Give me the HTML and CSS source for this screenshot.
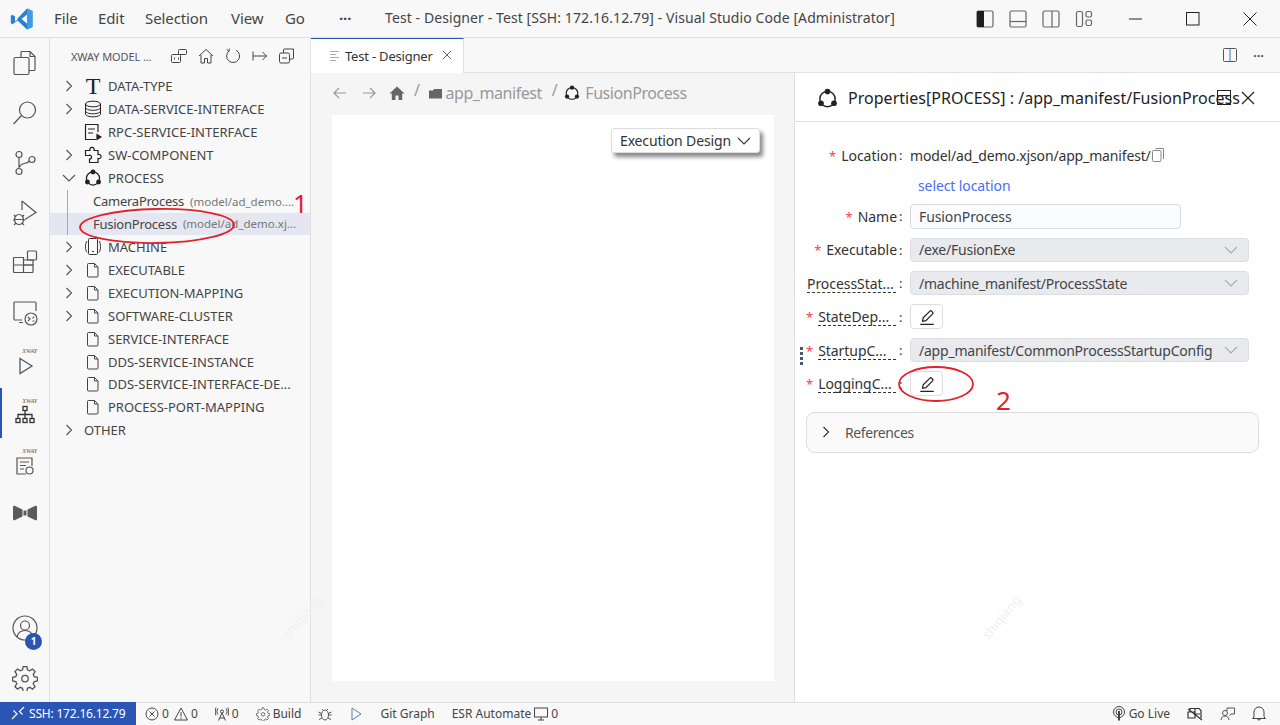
FILE: index.html
```html
<!DOCTYPE html>
<html lang="en">
<head>
    <meta charset="UTF-8">
    <title>Test - Designer - Test [SSH: 172.16.12.79] - Visual Studio Code [Administrator]</title>
    <link rel="stylesheet" href="styles.css">
</head>
<body>
    <svg class="sprite" width="0" height="0">
        <symbol id="i-chev-r" viewBox="0 0 16 16"><path d="M5.500 3l5 5-5 5" fill="none" stroke="currentColor" stroke-width="1.100"/></symbol>
        <symbol id="i-chev-d" viewBox="0 0 16 16"><path d="M2 5l6 6 6-6" fill="none" stroke="currentColor" stroke-width="1.100"/></symbol>
        <symbol id="i-x" viewBox="0 0 16 16"><path d="M2.500 2.500l11 11M13.500 2.500l-11 11" fill="none" stroke="currentColor" stroke-width="1.100"/></symbol>
        <symbol id="i-file" viewBox="0 0 16 16"><path d="M3.500 1.500h6l3.500 3.500v9a1 1 0 0 1-1 1h-8.500a1 1 0 0 1-1-1v-11.500a1 1 0 0 1 1-1zM9.500 1.500v3.500h3.500" fill="none" stroke="#444" stroke-width="1"/></symbol>
        <symbol id="i-process" viewBox="0 0 20 20"><circle cx="10" cy="10.500" r="7.300" fill="none" stroke="#222" stroke-width="1.400"/><circle cx="10" cy="3.300" r="2.700" fill="#222"/><circle cx="3.800" cy="14.500" r="2.700" fill="#222"/><circle cx="16.200" cy="14.500" r="2.700" fill="#222"/></symbol>
        <symbol id="i-pen" viewBox="0 0 16 16"><path d="M2 14.500h12M4 11.800l.6-3 6-6a1 1 0 0 1 1.400 0l1 1a1 1 0 0 1 0 1.400l-6 6z" fill="none" stroke="#222" stroke-width="1.100"/></symbol>
        <symbol id="i-gear" viewBox="0 0 24 24"><path d="M10.300 1.500h3.400l.6 3 2 .9 2.600-1.700 2.400 2.400-1.700 2.600.9 2 3 .6v3.400l-3 .6-.9 2 1.700 2.600-2.400 2.400-2.600-1.700-2 .9-.6 3h-3.400l-.6-3-2-.9-2.600 1.700-2.400-2.400 1.700-2.600-.9-2-3-.6v-3.400l3-.6.9-2-1.700-2.600 2.400-2.400 2.600 1.700 2-.9z" fill="none" stroke="currentColor" stroke-width="1.200"/><circle cx="12" cy="12.500" r="3" fill="none" stroke="currentColor" stroke-width="1.200"/></symbol>
    </svg>

    <div class="titlebar">
        <svg class="logo" width="24" height="24" viewBox="0 0 24 24"><path d="M17 1.500l5.500 2.600v15.800l-5.500 2.600-9.500-9-5 3.800-1.700-1v-7.600l1.700-1 5 3.800z" fill="#2b7fd4"/><path d="M17 7.500l-5.500 4.500 5.500 4.500z" fill="#fff"/><path d="M17 1.500l5.500 2.600v15.800l-5.500 2.600z" fill="#3d9be9"/><path d="M5 9.500l3 2.500-3 2.500z" fill="#fff"/></svg>
        <nav class="menu">
            <span class="m-file">File</span>
            <span class="m-edit">Edit</span>
            <span class="m-sel">Selection</span>
            <span class="m-view">View</span>
            <span class="m-go">Go</span>
            <span class="m-more">···</span>
        </nav>
        <div class="wintitle">Test - Designer - Test [SSH: 172.16.12.79] - Visual Studio Code [Administrator]</div>
        <div class="layout-btns">
            <svg width="18" height="18" viewBox="0 0 18 18"><rect x="1" y="1" width="16" height="16" rx="1.500" fill="none" stroke="#666" stroke-width="1.200"/><rect x="1" y="1" width="7" height="16" fill="#1e1e1e"/></svg>
            <svg width="18" height="18" viewBox="0 0 18 18"><rect x="1" y="1" width="16" height="16" rx="1.500" fill="none" stroke="#666" stroke-width="1.200"/><path d="M1 11.500h16" stroke="#666" stroke-width="1.200"/></svg>
            <svg width="18" height="18" viewBox="0 0 18 18"><rect x="1" y="1" width="16" height="16" rx="1.500" fill="none" stroke="#666" stroke-width="1.200"/><path d="M10 1v16" stroke="#666" stroke-width="1.200"/></svg>
            <svg width="18" height="18" viewBox="0 0 18 18"><rect x="1.500" y="1.500" width="6" height="15" rx="1.500" fill="none" stroke="#666" stroke-width="1.200"/><rect x="11" y="1.500" width="5.500" height="5.500" rx="1.500" fill="none" stroke="#666" stroke-width="1.200"/><rect x="11" y="10" width="5.500" height="5.500" rx="1.500" fill="none" stroke="#666" stroke-width="1.200"/></svg>
        </div>
        <div class="win-btns">
            <svg width="14" height="14" viewBox="0 0 14 14"><path d="M0 7h13" stroke="#222"/></svg>
            <svg width="14" height="14" viewBox="0 0 14 14"><rect x=".5" y=".5" width="12.500" height="12.500" fill="none" stroke="#222"/></svg>
            <svg width="14" height="14" viewBox="0 0 14 14"><path d="M.5.5l13 13M13.500.5l-13 13" stroke="#222" fill="none"/></svg>
        </div>
    </div>

    <div class="main">
        <aside class="activity">
            <div class="act"><svg width="26" height="26" viewBox="0 0 26 26" fill="none" stroke="#555" stroke-width="1.200"><path d="M10 1.500h8l5 5v13a1 1 0 0 1-1 1h-5"/><path d="M10 1.500a1 1 0 0 0-1 1v5M18 1.500v5h5"/><rect x="2" y="7.500" width="15" height="17" rx="1.500"/></svg></div>
            <div class="act"><svg width="26" height="26" viewBox="0 0 26 26" fill="none" stroke="#555" stroke-width="1.200"><circle cx="15.500" cy="10" r="8"/><path d="M9.500 15.500L1.500 24"/></svg></div>
            <div class="act"><svg width="26" height="26" viewBox="0 0 26 26" fill="none" stroke="#555" stroke-width="1.200"><circle cx="7" cy="4.500" r="3"/><circle cx="7" cy="21.500" r="3"/><circle cx="20" cy="9.500" r="3"/><path d="M7 7.500v11M17.500 11C14 15 9 12 7.500 17"/></svg></div>
            <div class="act"><svg width="26" height="26" viewBox="0 0 26 26" fill="none" stroke="#555" stroke-width="1.200"><path d="M10 1l14 11.500-11 7"/><path d="M10 1v9"/><ellipse cx="7" cy="19.500" rx="4.500" ry="5"/><path d="M2 15l2 2M12 15l-2 2M1 20h2M11 20h2M2 25l2-2M12 25l-2-2M3 19.500h8"/></svg></div>
            <div class="act"><svg width="26" height="26" viewBox="0 0 26 26" fill="none" stroke="#555" stroke-width="1.200"><path d="M2 7.500h9.500v15H2a.5.5 0 0 1-.5-.5V8a.5.5 0 0 1 .5-.5zM1.500 15h19.500v7a.5.5 0 0 1-.5.500h-9V7.500"/><path d="M11.500 15h9.500v-5h-9.500" stroke="#555"/><rect x="15.500" y="1" width="9" height="9" rx="1"/></svg></div>
            <div class="act"><svg width="26" height="26" viewBox="0 0 26 26" fill="none" stroke="#555" stroke-width="1.200"><path d="M10 20H3a1 1 0 0 1-1-1V3a1 1 0 0 1 1-1h20a1 1 0 0 1 1 1v8M7 22.500h4"/><circle cx="19" cy="19" r="6"/><path d="M16 17l2 2-2 2M20.500 21h2M22 16.800l-1.500 1.500"/></svg></div>
            <div class="act xway"><i class="xw">XWAY</i><svg width="22" height="22" viewBox="0 0 22 22" fill="none" stroke="#555" stroke-width="1.300"><path d="M6 4.500l12 7.500-12 7.500z"/></svg></div>
            <div class="act active xway"><i class="xw">XWAY</i><svg width="22" height="22" viewBox="0 0 22 22" fill="none" stroke="#333" stroke-width="1.300"><rect x="9" y="2.500" width="4" height="4"/><rect x="2" y="14.500" width="4" height="4"/><rect x="9" y="14.500" width="4" height="4"/><rect x="16" y="14.500" width="4" height="4"/><path d="M11 6.500v8M4 14.500v-4h14v4"/></svg></div>
            <div class="act xway"><i class="xw">XWAY</i><svg width="22" height="22" viewBox="0 0 22 22" fill="none" stroke="#555" stroke-width="1.200"><path d="M12 20H3V4h15v8M6 8h9M6 11.500h6M6 15h4"/><circle cx="15.500" cy="16.500" r="3.500"/></svg></div>
            <div class="act"><svg width="26" height="18" viewBox="0 0 26 18"><path d="M1 2.500l1-1 8.500 4v7l-8.500 4-1-1zM25 2.500l-1-1-8.500 4v7l8.500 4 1-1z" fill="#5a5a5a"/><rect x="11.500" y="6.500" width="3" height="5" fill="#5a5a5a"/></svg></div>
            <div class="act-spacer"></div>
            <div class="act account">
                <svg width="26" height="26" viewBox="0 0 26 26" fill="none" stroke="#555" stroke-width="1.200"><circle cx="13" cy="13" r="12"/><circle cx="13" cy="10.500" r="4.500"/><path d="M5 22c1-5 4-6.500 8-6.500s7 1.500 8 6.500"/></svg>
                <span class="badge">1</span>
            </div>
            <div class="act gear"><svg width="26" height="26"><use href="#i-gear"/></svg></div>
        </aside>

        <aside class="sidebar">
            <header class="side-head">
                <span class="side-title">XWAY MODEL ...</span>
                <div class="side-tools">
                    <svg width="16" height="16" viewBox="0 0 16 16" fill="none" stroke="#444"><rect x=".5" y="6.500" width="9" height="8" rx="1"/><rect x="7.500" y="1.500" width="8" height="5" rx="1"/><path d="M3 10.500h1M7 10.500h1" stroke-width="2"/></svg>
                    <svg width="16" height="16" viewBox="0 0 16 16" fill="none" stroke="#444"><path d="M1 8l7-6.500L15 8M3 7v8h3.500v-4.500h3V15H13V7"/></svg>
                    <svg width="16" height="16" viewBox="0 0 16 16" fill="none" stroke="#444"><path d="M4 3a6.500 6.500 0 1 0 7-.8M1.500 1.500L4 3.500l.5-2.800"/></svg>
                    <svg width="16" height="16" viewBox="0 0 16 16" fill="none" stroke="#444"><path d="M1 3.500v9M1 8h13.500M10.500 4l4 4-4 4"/></svg>
                    <svg width="16" height="16" viewBox="0 0 16 16" fill="none" stroke="#444"><rect x=".5" y="5" width="10" height="10" rx="1.500"/><path d="M4.500 5V2a1 1 0 0 1 1-1h9v9a1 1 0 0 1-1 1h-3M3 10h5"/></svg>
                </div>
            </header>
            <ul class="tree">
                <li class="row"><svg class="chev" width="16" height="16"><use href="#i-chev-r"/></svg><span class="t-icon serif-t">T</span><span>DATA-TYPE</span></li>
                <li class="row"><svg class="chev" width="16" height="16"><use href="#i-chev-r"/></svg><span class="t-icon"><svg width="18" height="18" viewBox="0 0 18 18" fill="none" stroke="#222"><ellipse cx="9" cy="4" rx="7.500" ry="2.800"/><path d="M1.500 4v10c0 1.500 3.300 2.800 7.500 2.800s7.500-1.300 7.500-2.800V4M1.500 7.500c0 1.500 3.300 2.800 7.500 2.800s7.500-1.300 7.500-2.800M1.500 11c0 1.500 3.300 2.800 7.500 2.800s7.500-1.300 7.500-2.800"/></svg></span><span>DATA-SERVICE-INTERFACE</span></li>
                <li class="row no-chev"><span class="t-icon"><svg width="18" height="18" viewBox="0 0 18 18" fill="none" stroke="#222" stroke-width="1.200"><path d="M14 9V1.500H1.500v15H12M4 6h7M4 10h5"/><path d="M13 11.500l4 2.500-4 2.500z" fill="#222"/></svg></span><span>RPC-SERVICE-INTERFACE</span></li>
                <li class="row"><svg class="chev" width="16" height="16"><use href="#i-chev-r"/></svg><span class="t-icon"><svg width="18" height="18" viewBox="0 0 18 18" fill="none" stroke="#222" stroke-width="1.200"><path d="M1.500 4.500h4.500a2.200 2.200 0 1 1 4 0h4v4a2.200 2.200 0 1 1 0 4v4h-8.500v-3.500a2 2 0 1 0 0-4V9.500H1.500z"/></svg></span><span>SW-COMPONENT</span></li>
                <li class="row"><svg class="chev" width="16" height="16"><use href="#i-chev-d"/></svg><span class="t-icon"><svg width="18" height="18"><use href="#i-process"/></svg></span><span>PROCESS</span></li>
                <li class="row leaf"><span class="leaf-name">CameraProcess</span><span class="leaf-desc">(model/ad_demo....</span></li>
                <li class="row leaf selected"><span class="leaf-name">FusionProcess</span><span class="leaf-desc">(model/ad_demo.xj...</span></li>
                <li class="row"><svg class="chev" width="16" height="16"><use href="#i-chev-r"/></svg><span class="t-icon"><svg width="18" height="18" viewBox="0 0 18 18" fill="none" stroke="#333"><rect x="4.500" y=".5" width="9" height="16" rx="1"/><path d="M3 3C1 5 1 12 3 14.500M15 3c2 2 2 9 0 11.500M8 13.500h2"/></svg></span><span>MACHINE</span></li>
                <li class="row"><svg class="chev" width="16" height="16"><use href="#i-chev-r"/></svg><span class="t-icon"><svg width="16" height="16"><use href="#i-file"/></svg></span><span>EXECUTABLE</span></li>
                <li class="row"><svg class="chev" width="16" height="16"><use href="#i-chev-r"/></svg><span class="t-icon"><svg width="16" height="16"><use href="#i-file"/></svg></span><span>EXECUTION-MAPPING</span></li>
                <li class="row"><svg class="chev" width="16" height="16"><use href="#i-chev-r"/></svg><span class="t-icon"><svg width="16" height="16"><use href="#i-file"/></svg></span><span>SOFTWARE-CLUSTER</span></li>
                <li class="row no-chev"><span class="t-icon"><svg width="16" height="16"><use href="#i-file"/></svg></span><span>SERVICE-INTERFACE</span></li>
                <li class="row no-chev"><span class="t-icon"><svg width="16" height="16"><use href="#i-file"/></svg></span><span>DDS-SERVICE-INSTANCE</span></li>
                <li class="row no-chev"><span class="t-icon"><svg width="16" height="16"><use href="#i-file"/></svg></span><span>DDS-SERVICE-INTERFACE-DE...</span></li>
                <li class="row no-chev"><span class="t-icon"><svg width="16" height="16"><use href="#i-file"/></svg></span><span>PROCESS-PORT-MAPPING</span></li>
                <li class="row"><svg class="chev" width="16" height="16"><use href="#i-chev-r"/></svg><span>OTHER</span></li>
            </ul>
        </aside>

        <section class="editor">
            <div class="tabs">
                <div class="tab">
                    <svg width="12" height="12" viewBox="0 0 12 12" stroke="#aaa"><path d="M1 1.500h9M1 4.500h6M1 7.500h9M1 10.500h6"/></svg>
                    <span>Test - Designer</span>
                    <svg class="tab-x" width="12" height="12"><use href="#i-x"/></svg>
                </div>
                <div class="tab-actions">
                    <svg width="14" height="14" viewBox="0 0 14 14" fill="none"><rect x=".5" y=".5" width="13" height="13" rx="1" stroke="#555"/><path d="M7 .5v13" stroke="#2b7fd4"/></svg>
                    <span class="dots">···</span>
                </div>
            </div>
            <div class="panes">
                <div class="designer">
                    <div class="crumbs">
                        <svg width="16" height="16" viewBox="0 0 16 16" fill="none" stroke="#999" stroke-width="1.200"><path d="M14 8H2M7 3L2 8l5 5"/></svg>
                        <svg class="c-next" width="16" height="16" viewBox="0 0 16 16" fill="none" stroke="#999" stroke-width="1.200"><path d="M2 8h12M9 3l5 5-5 5"/></svg>
                        <svg class="c-home" width="16" height="16" viewBox="0 0 16 16" fill="#666"><path d="M8 1.500L0.500 8.500h2.300V15h3.700v-4.500h3V15h3.700V8.500h2.300z"/></svg>
                        <span class="c-sep">/</span>
                        <svg class="c-folder" width="13" height="13" viewBox="0 0 13 13" fill="#666"><path d="M0 3.500h4l1-1.500h8v9.500H0z"/></svg>
                        <span class="c-text">app_manifest</span>
                        <span class="c-sep c-sep2">/</span>
                        <svg class="c-proc" width="16" height="16"><use href="#i-process"/></svg>
                        <span class="c-text">FusionProcess</span>
                    </div>
                    <div class="canvas">
                        <button class="design-btn">Execution Design <svg width="16" height="16"><use href="#i-chev-d"/></svg></button>
                    </div>
                </div>
                <div class="props">
                    <header class="props-head">
                        <svg width="21" height="21"><use href="#i-process"/></svg>
                        <span class="props-title">Properties[PROCESS] : /app_manifest/FusionProcess</span>
                        <svg class="head-box" width="14" height="15" viewBox="0 0 14 15" fill="none" stroke="#222"><rect x=".5" y=".5" width="13" height="14"/><path d="M.5 5.500h13"/></svg>
                        <svg class="head-x" width="14" height="14" viewBox="0 0 14 14"><path d="M1 1l12 12M13 1L1 13" stroke="#222" stroke-width="1.200"/></svg>
                    </header>
                    <div class="form">
                        <div class="f-row f-loc">
                            <label class="f-label"><em>*</em>Location</label><b>:</b>
                            <div class="f-val loc-val">model/ad_demo.xjson/app_manifest/
                                <svg width="12" height="14" viewBox="0 0 12 14" fill="none" stroke="#888"><path d="M3.500.5h8v10.500"/><rect x=".5" y="2.500" width="8.500" height="11" rx="1"/></svg>
                            </div>
                        </div>
                        <a class="select-loc">select location</a>
                        <div class="f-row">
                            <label class="f-label"><em>*</em>Name</label><b>:</b>
                            <div class="f-input">FusionProcess</div>
                        </div>
                        <div class="f-row">
                            <label class="f-label"><em>*</em>Executable</label><b>:</b>
                            <div class="f-select">/exe/FusionExe<svg width="16" height="16"><use href="#i-chev-d"/></svg></div>
                        </div>
                        <div class="f-row">
                            <label class="f-label"><span class="dash dash-wide">ProcessStat...</span></label><b>:</b>
                            <div class="f-select">/machine_manifest/ProcessState<svg width="16" height="16"><use href="#i-chev-d"/></svg></div>
                        </div>
                        <div class="f-row">
                            <label class="f-label"><em>*</em><span class="dash">StateDep...</span></label><b>:</b>
                            <button class="pen-btn"><svg width="18" height="18"><use href="#i-pen"/></svg></button>
                        </div>
                        <div class="f-row">
                            <label class="f-label"><em>*</em><span class="dash">StartupC...</span></label><b>:</b>
                            <div class="f-select">/app_manifest/CommonProcessStartupConfig<svg width="16" height="16"><use href="#i-chev-d"/></svg></div>
                        </div>
                        <div class="f-row">
                            <label class="f-label"><em>*</em><span class="dash">LoggingC...</span></label><b>:</b>
                            <button class="pen-btn"><svg width="18" height="18"><use href="#i-pen"/></svg></button>
                        </div>
                        <div class="refs"><svg width="16" height="16"><use href="#i-chev-r"/></svg><span>References</span></div>
                    </div>
                </div>
            </div>
        </section>
    </div>

    <footer class="status">
        <div class="remote">
            <svg width="14" height="14" viewBox="0 0 14 14" fill="none" stroke="#fff" stroke-width="1.200"><path d="M1 13l5-5-3.500-3.500M13 1L8.500 5.500 11.500 8.500"/></svg>
            SSH: 172.16.12.79
        </div>
        <div class="st-item st-first">
            <svg width="14" height="14" viewBox="0 0 14 14" fill="none" stroke="#444"><circle cx="7" cy="7" r="6"/><path d="M4.500 4.500l5 5M9.500 4.500l-5 5"/></svg>0
            <svg class="st-warn" width="14" height="14" viewBox="0 0 14 14" fill="none" stroke="#444"><path d="M7 1l6.500 12H.5zM7 5v4.500M7 10.500v1.500"/></svg>0
        </div>
        <div class="st-item">
            <svg width="14" height="14" viewBox="0 0 14 14" fill="none" stroke="#444"><circle cx="7" cy="4.500" r="1.500"/><path d="M7 6l-3.500 7.500M7 6l3.500 7.500M4.500 11h5M3 1.500c-1.500 2-1.500 4.500 0 6M11 1.500c1.500 2 1.500 4.500 0 6M1 .5c-1 3-1 6 0 8M13 .5c1 3 1 6 0 8"/></svg>0
        </div>
        <div class="st-item"><svg width="14" height="14"><use href="#i-gear"/></svg>Build</div>
        <div class="st-item">
            <svg width="14" height="14" viewBox="0 0 14 14" fill="none" stroke="#555"><ellipse cx="7" cy="8" rx="3.500" ry="5"/><path d="M4 2l1.500 1.500M10 2L8.500 3.500M.5 5l3 1.500M13.500 5l-3 1.500M.5 8h3M13.500 8h-3M1 12.500L4 11M13 12.500L10 11"/></svg>
        </div>
        <div class="st-item"><svg width="14" height="14" viewBox="0 0 14 14" fill="none" stroke="#5a7ea8"><path d="M3 1l9 6-9 6z"/></svg></div>
        <div class="st-item">Git Graph</div>
        <div class="st-item">ESR Automate
            <svg width="14" height="14" viewBox="0 0 14 14" fill="none" stroke="#444"><rect x=".5" y="1" width="13" height="9"/><path d="M7 10v3M4 13h6"/></svg>0
        </div>
        <div class="st-spacer"></div>
        <div class="st-item">
            <svg width="14" height="15" viewBox="0 0 14 15" fill="none" stroke="#444"><circle cx="7" cy="6" r="5.500"/><circle cx="7" cy="6" r="3"/><path d="M7 5v9.500" stroke-width="2"/></svg>Go Live
        </div>
        <div class="st-item">
            <svg width="16" height="14" viewBox="0 0 16 14" fill="none" stroke="#333" stroke-width="1.200"><path d="M3 5V1.500h9l2 2V11M1 5h7v6H1zM8 2v5h5M1 2l14 11"/></svg>
        </div>
        <div class="st-item">
            <svg width="15" height="14" viewBox="0 0 15 14" fill="none" stroke="#555"><circle cx="5" cy="6" r="2.500"/><path d="M1 13c.5-3 2-4 4-4s3.500 1 4 4M7 4V1h7.500v6H11l-1.500 1.500"/></svg>
        </div>
        <div class="st-item st-last">
            <svg width="14" height="15" viewBox="0 0 14 15" fill="none" stroke="#444"><path d="M2 11V6a5 5 0 0 1 10 0v5l1.500 1.500H.5zM5.500 12.500a1.500 1.500 0 0 0 3 0"/></svg>
        </div>
    </footer>

    <!-- annotations drawn over the screenshot -->
    <svg class="marks" width="1280" height="725" viewBox="0 0 1280 725" fill="none" stroke="#e3202c" stroke-width="1.800">
        <ellipse cx="157" cy="226" rx="77" ry="17" transform="rotate(-1 157 226)"/>
        <ellipse cx="936" cy="384" rx="37" ry="17"/>
    </svg>
    <span class="mark-num n1">1</span>
    <span class="mark-num n2">2</span>
    <div class="grip"><i></i><i></i><i></i><i></i></div>
    <span class="wm w1">shiqiang</span>
    <span class="wm w2">shiqiang</span>
</body>
</html>
```
FILE: styles.css
```css
* {
    box-sizing: border-box;
}

html, body {
    margin: 0;
    height: 100%;
    overflow: hidden;
}

body {
    width: 1280px;
    height: 725px;
    display: flex;
    flex-direction: column;
    position: relative;
    font-family: "Noto Sans", "Open Sans", sans-serif;
    font-size: 13px;
    color: #333;
    background: #f8f8f8;
}

.sprite {
    position: absolute;
}

svg {
    flex: none;
    display: block;
}

/* title bar */
.titlebar {
    height: 38px;
    flex: none;
    display: flex;
    align-items: center;
    border-bottom: 1px solid #e0e0e0;
    background: #f8f8f8;
    padding-left: 10px;
    font-size: 14px;
}

.menu {
    display: flex;
    margin-left: 20px;
    margin-bottom: 2px;
    color: #444;
    font-size: 15px;
    letter-spacing: -0.1px;
}

.m-file { width: 44px; }
.m-edit { width: 47px; }
.m-sel { width: 86px; }
.m-view { width: 54px; }
.m-go { width: 54px; }
.m-more { width: 30px; font-weight: 700; }

.wintitle {
    position: absolute;
    left: 385px;
    top: 8px;
    color: #444;
    white-space: nowrap;
    letter-spacing: 0.09px;
}

.layout-btns {
    margin-left: auto;
    display: flex;
    gap: 15px;
    margin-right: 36px;
}

.win-btns {
    display: flex;
    gap: 43px;
    margin-right: 23px;
}

/* main area */
.main {
    flex: 1;
    display: flex;
    min-height: 0;
}

.activity {
    width: 50px;
    flex: none;
    display: flex;
    flex-direction: column;
    border-right: 1px solid #e0e0e0;
}

.act {
    height: 50px;
    flex: none;
    display: flex;
    align-items: center;
    justify-content: center;
    position: relative;
}

.act.active {
    border-left: 2px solid #2a55b5;
    padding-right: 2px;
}

.act-spacer {
    flex: 1;
}

.xway svg {
    margin-top: 3px;
}

.xw {
    position: absolute;
    top: 9px;
    left: 21px;
    font-family: "Liberation Serif", serif;
    font-size: 7px;
    color: #555;
    transform: scaleX(0.85);
}

.active .xw {
    left: 19px;
}

.badge {
    position: absolute;
    left: 25px;
    top: 30px;
    width: 17px;
    height: 17px;
    border-radius: 50%;
    background: #2a55b5;
    color: #fff;
    font-size: 10px;
    font-weight: 700;
    line-height: 17px;
    text-align: center;
}

.gear {
    color: #555;
    height: 49px;
}

/* sidebar */
.sidebar {
    width: 261px;
    flex: none;
    border-right: 1px solid #e0e0e0;
}

.side-head {
    height: 37px;
    padding-bottom: 1px;
    display: flex;
    align-items: center;
    padding-left: 21px;
}

.side-title {
    font-size: 11px;
    color: #555;
    width: 100px;
    white-space: nowrap;
    letter-spacing: -0.1px;
}

.side-tools {
    display: flex;
    gap: 11px;
}

.tree {
    list-style: none;
    margin: 0;
    padding: 0;
}

.row {
    height: 22.930px;
    display: flex;
    align-items: center;
    padding-left: 11px;
    white-space: nowrap;
    color: #444;
}

.chev {
    margin-right: 7px;
    color: #555;
}

.no-chev {
    padding-left: 34px;
}

.t-icon {
    width: 18px;
    height: 18px;
    margin-right: 6px;
    display: flex;
    align-items: center;
    justify-content: center;
}

.serif-t {
    font-family: "Liberation Serif", serif;
    font-size: 24px;
    color: #222;
}

.leaf {
    padding-left: 43px;
    position: relative;
    letter-spacing: -0.25px;
}

.leaf::before {
    content: "";
    position: absolute;
    left: 17px;
    top: 0;
    bottom: 0;
    width: 1px;
    background: #aaa;
}

.leaf-desc {
    font-size: 11.500px;
    color: #777;
    margin-left: 6px;
    letter-spacing: 0;
}

.selected {
    background: #e4e6f1;
}

/* editor */
.editor {
    flex: 1;
    display: flex;
    flex-direction: column;
    min-width: 0;
}

.tabs {
    height: 35px;
    flex: none;
    display: flex;
    justify-content: space-between;
    border-bottom: 1px solid #e0e0e0;
}

.tab {
    width: 153px;
    height: 35px;
    background: #fff;
    border-top: 1px solid #2a55b5;
    border-right: 1px solid #e0e0e0;
    display: flex;
    align-items: center;
    padding-left: 18px;
    letter-spacing: -0.2px;
}

.tab span {
    margin-left: 4px;
}

.tab-x {
    margin-left: 8px;
    margin-top: -3px;
    color: #444;
}

.tab-actions {
    display: flex;
    align-items: center;
    gap: 16px;
    padding-right: 16px;
}

.dots {
    font-weight: 700;
    color: #555;
}

.panes {
    flex: 1;
    display: flex;
    min-height: 0;
}

.designer {
    width: 484px;
    flex: none;
    background: #f5f5f5;
    border-right: 1px solid #e0e0e0;
    padding: 0 20px 21px 21px;
    display: flex;
    flex-direction: column;
}

.crumbs {
    height: 42px;
    flex: none;
    padding-bottom: 2px;
    display: flex;
    align-items: center;
    padding-left: 0;
    color: #999;
    font-size: 16px;
    letter-spacing: -0.45px;
}

.c-next { margin-left: 13px; }
.c-home { margin-left: 12px; color: #666; }
.c-sep { margin: -6px 0 0 9px; }
.c-sep2 { margin-left: 10px; margin-right: 2px; }
.c-folder { margin-left: 9px; margin-right: 4px; }
.c-proc { margin-left: 5px; margin-right: 5px; }

.canvas {
    flex: 1;
    background: #fff;
    display: flex;
    justify-content: flex-end;
    align-items: flex-start;
    padding: 13px 14px 0 0;
}

.design-btn {
    height: 25px;
    width: 149px;
    background: #fff;
    border: 1px solid #ddd;
    border-radius: 3px;
    box-shadow: 3px 4px 4px #888;
    padding: 0 7px 0 8px;
    display: flex;
    align-items: center;
    justify-content: space-between;
    font-family: inherit;
    font-size: 14px;
    color: #333;
    letter-spacing: -0.15px;
}

/* properties */
.props {
    flex: 1;
    background: #fff;
    min-width: 0;
}

.props-head {
    height: 49px;
    border-bottom: 1px solid #e0e0e0;
    display: flex;
    align-items: center;
    padding: 2px 0 0 22px;
    position: relative;
    color: #222;
}

.props-title {
    font-size: 16px;
    margin-left: 10px;
    white-space: nowrap;
    letter-spacing: 0.03px;
}

.head-box {
    position: absolute;
    left: 422px;
    top: 17px;
}

.head-x {
    position: absolute;
    left: 446px;
    top: 18px;
}

.form {
    padding: 21px 0 0 11px;
}

.f-row {
    display: flex;
    align-items: center;
    height: 24px;
    margin-bottom: 9.600px;
}

.f-loc {
    margin-bottom: 9px;
}

.f-label {
    width: 91px;
    text-align: right;
    white-space: nowrap;
    color: #333;
    font-size: 14px;
    letter-spacing: -0.05px;
}

.f-label em {
    color: #f5424f;
    font-style: normal;
    margin-right: 5px;
    font-size: 13px;
}

.dash {
    display: inline-block;
    width: 78px;
    text-align: left;
    border-bottom: 1px dashed #333;
    line-height: 17px;
    margin-right: 1px;
}

.dash-wide {
    width: 89px;
}

.f-row b {
    width: 13px;
    padding-left: 2px;
    font-weight: 400;
    color: #333;
}

.f-val {
    display: flex;
    align-items: center;
    white-space: nowrap;
    font-size: 14px;
    letter-spacing: -0.15px;
    gap: 1px;
}

.select-loc {
    display: block;
    margin: 0 0 8px 112px;
    height: 20px;
    line-height: 20px;
    color: #4a6cf7;
    font-size: 14px;
    letter-spacing: -0.1px;
}

.f-input {
    width: 271px;
    height: 25px;
    border: 1px solid #d8dade;
    border-radius: 4px;
    background: #fbfcff;
    padding-left: 8px;
    line-height: 23px;
    font-size: 14px;
    color: #444;
    letter-spacing: -0.1px;
}

.f-select {
    width: 339px;
    height: 24px;
    border: 1px solid #dcdee3;
    border-radius: 4px;
    background: #e9eaee;
    padding: 0 9px 0 8px;
    display: flex;
    align-items: center;
    justify-content: space-between;
    font-size: 14px;
    color: #444;
    letter-spacing: -0.22px;
    white-space: nowrap;
}

.f-select svg {
    color: #aaa;
}

.pen-btn {
    width: 33px;
    height: 25px;
    background: #fff;
    border: 1px solid #ddd;
    border-radius: 4px;
    display: flex;
    align-items: center;
    justify-content: center;
    padding: 0;
}

.refs {
    width: 453px;
    height: 41px;
    margin-top: 16px;
    background: #fafafa;
    border: 1px solid #dcdcdc;
    border-radius: 9px;
    display: flex;
    align-items: center;
    padding-left: 11px;
    color: #555;
    font-size: 14px;
    letter-spacing: -0.4px;
}

.refs svg {
    color: #333;
}

.refs span {
    margin-left: 11px;
}

/* status bar */
.status {
    height: 23px;
    flex: none;
    display: flex;
    align-items: center;
    border-top: 1px solid #e0e0e0;
    background: #f8f8f8;
    font-size: 12px;
    color: #444;
    white-space: nowrap;
    padding-bottom: 1px;
}

.remote {
    width: 136px;
    height: 23px;
    margin-top: -1px;
    background: #2a55b5;
    color: #fff;
    display: flex;
    align-items: center;
    gap: 4px;
    padding-left: 11px;
    letter-spacing: -0.2px;
}

.st-item {
    display: flex;
    align-items: center;
    gap: 3px;
    margin-left: 17px;
}

.st-first {
    margin-left: 9px;
}

.st-warn {
    margin-left: 2px;
}

.st-spacer {
    flex: 1;
}

.st-last {
    margin-right: 14px;
}

/* annotations */
.marks {
    position: absolute;
    left: 0;
    top: 0;
    pointer-events: none;
}

.mark-num {
    position: absolute;
    color: #e3202c;
    font-size: 26px;
    line-height: 30px;
}

.n1 { left: 293px; top: 188px; }
.n2 { left: 996px; top: 385px; }

.grip {
    position: absolute;
    left: 800px;
    top: 347px;
    display: flex;
    flex-direction: column;
    gap: 2px;
}

.grip i {
    width: 3px;
    height: 3px;
    background: #4a5578;
    display: block;
}

.wm {
    position: absolute;
    color: #f0f0f0;
    font-size: 13px;
    transform: rotate(-50deg);
}

.w1 { left: 276px; top: 608px; }
.w2 { left: 975px; top: 608px; }
```
